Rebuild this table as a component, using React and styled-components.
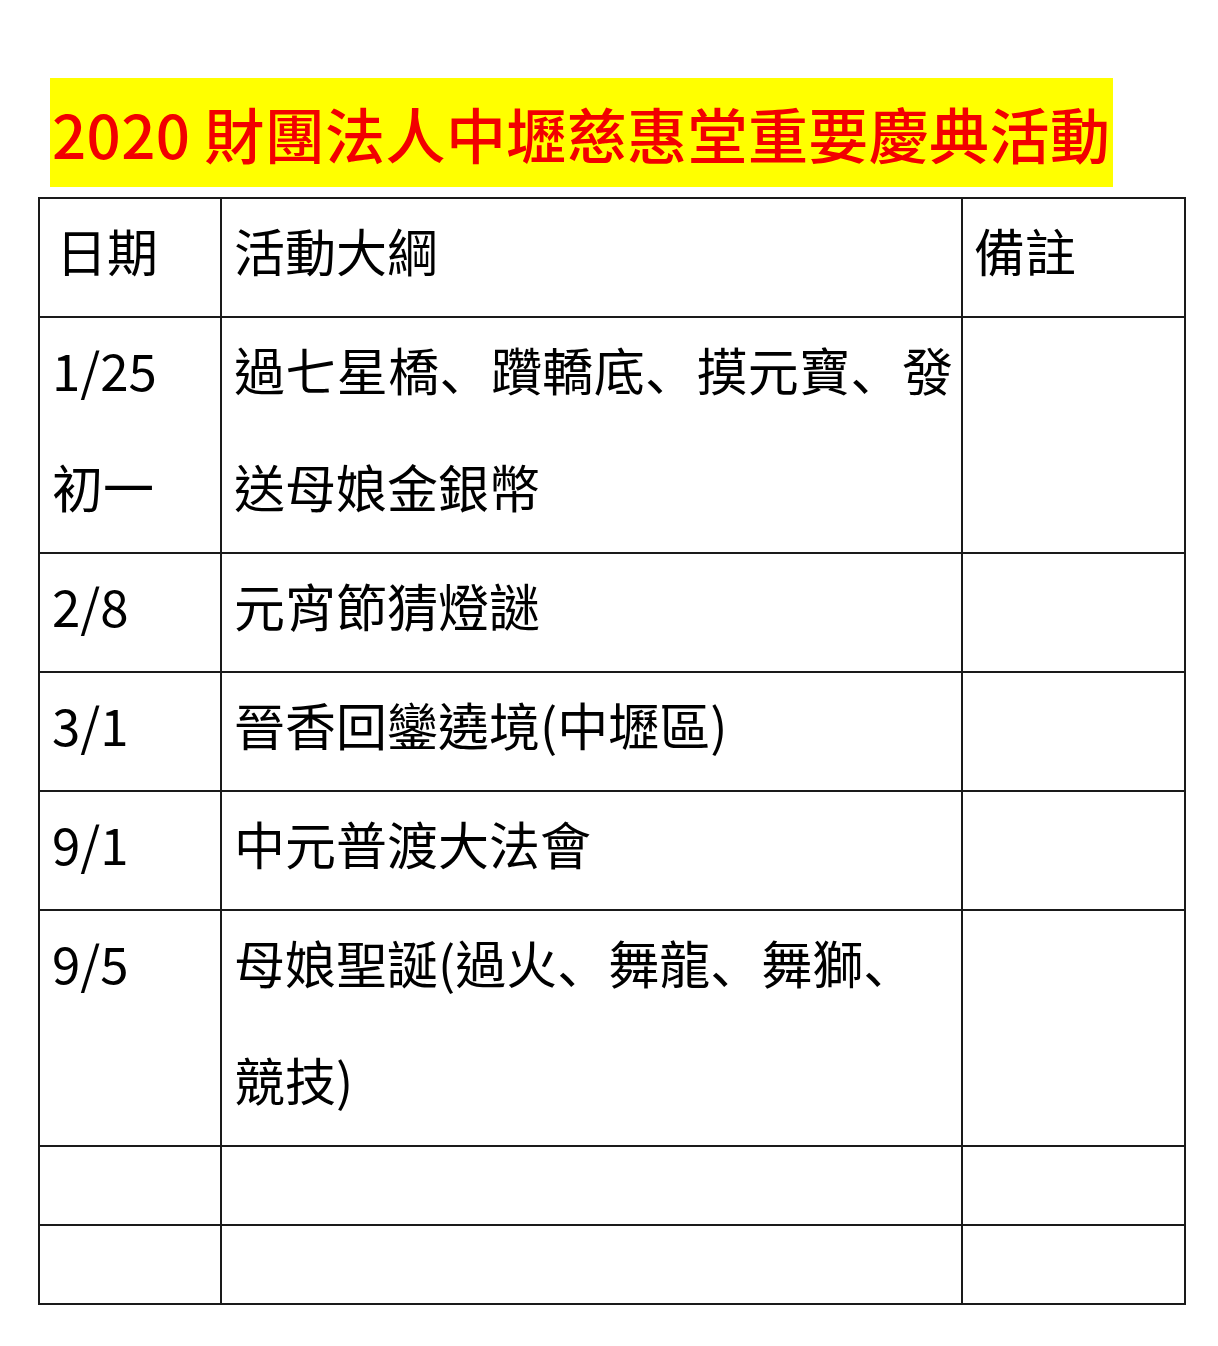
import styled, { createGlobalStyle } from "styled-components";

const GlobalStyle = createGlobalStyle`
  body {
    margin: 0;
    background: #ffffff;
    font-family: "Noto Sans CJK TC", "Noto Sans", sans-serif;
    color: #000000;
  }
`;

const Page = styled.div`
  width: 1218px;
  padding-top: 78px;
  padding-bottom: 44px;
`;

const Banner = styled.h1`
  margin: 0 0 10px 50px;
  width: 1063px;
  height: 109px;
  display: flex;
  align-items: center;
  padding-left: 2px;
  box-sizing: border-box;
  background: #ffff00;
  color: #f20000;
  font-size: 60px;
  font-weight: 500;
  white-space: nowrap;
  letter-spacing: 0.4px;
`;

const Table = styled.table`
  margin-left: 38px;
  width: 1148px;
  border-collapse: collapse;
  table-layout: fixed;
  border: 2px solid #1a1a1a;
`;

const Cell = styled.td`
  border: 2px solid #1a1a1a;
  padding: 0 8px 0 ${(p) => p.$indent ?? 12}px;
  vertical-align: top;
  font-size: 51px;
  line-height: 117px;
  height: ${(p) => (p.$empty ? "77px" : "auto")};
  text-align: ${(p) => (p.$justify ? "justify" : "left")};
`;

const HeadCell = styled(Cell).attrs({ as: "th" })`
  font-weight: 400;
`;

/* glyphs sit a little high in the line box of the original */
const Lines = styled.div`
  margin-top: -7px;
  margin-bottom: 7px;
`;

/* the enumeration comma sits bottom-left, as in a Japanese face */
const Pause = styled.span`
  font-family: "Noto Sans CJK JP", sans-serif;
`;

function withPauses(text) {
  return text.split("、").flatMap((part, i, all) =>
    i < all.length - 1 ? [part, <Pause key={i}>、</Pause>] : [part]
  );
}

const rows = [
  { date: ["1/25", "初一"], text: "過七星橋、躦轎底、摸元寶、發送母娘金銀幣", justify: true },
  { date: ["2/8"], text: "元宵節猜燈謎" },
  { date: ["3/1"], text: "晉香回鑾遶境(中壢區)" },
  { date: ["9/1"], text: "中元普渡大法會" },
  { date: ["9/5"], text: "母娘聖誕(過火、舞龍、舞獅、競技)" },
];

export default function App() {
  return (
    <>
      <GlobalStyle />
      <Page>
        <Banner>2020 財團法人中壢慈惠堂重要慶典活動</Banner>
        <Table>
          <colgroup>
            <col style={{ width: 182 }} />
            <col style={{ width: 741 }} />
            <col style={{ width: 223 }} />
          </colgroup>
          <thead>
            <tr>
              <HeadCell $indent={16}>
                <Lines>日期</Lines>
              </HeadCell>
              <HeadCell $indent={12}>
                <Lines>活動大綱</Lines>
              </HeadCell>
              <HeadCell $indent={11}>
                <Lines>備註</Lines>
              </HeadCell>
            </tr>
          </thead>
          <tbody>
            {rows.map((r) => (
              <tr key={r.date[0]}>
                <Cell>
                  <Lines>
                    {r.date.map((d, i) => (
                      <div key={i}>{d}</div>
                    ))}
                  </Lines>
                </Cell>
                <Cell $justify={r.justify}>
                  <Lines>{withPauses(r.text)}</Lines>
                </Cell>
                <Cell />
              </tr>
            ))}
            <tr>
              <Cell $empty />
              <Cell $empty />
              <Cell $empty />
            </tr>
            <tr>
              <Cell $empty />
              <Cell $empty />
              <Cell $empty />
            </tr>
          </tbody>
        </Table>
      </Page>
    </>
  );
}
